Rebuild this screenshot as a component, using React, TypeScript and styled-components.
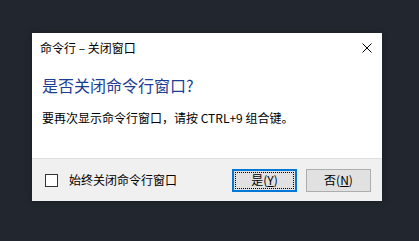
import React, { useState } from 'react';
import styled, { createGlobalStyle } from 'styled-components';

const Global = createGlobalStyle`
  html, body {
    margin: 0;
    padding: 0;
    background: #22272f;
  }
  body {
    font-family: "Noto Sans CJK SC", "Liberation Sans", sans-serif;
    width: 419px;
    height: 241px;
    overflow: hidden;
  }
`;

const Page = styled.div`
  padding: 33px 0 0 32px;
`;

const Dialog = styled.div`
  width: 350px;
  height: 168px;
  background: #ffffff;
  display: flex;
  flex-direction: column;
  box-shadow: 0 0 6px rgba(0, 0, 0, 0.35);
`;

const TitleBar = styled.div`
  height: 30px;
  display: flex;
  align-items: center;
  justify-content: space-between;
  padding: 0 10px 0 8px;
`;

const Title = styled.span`
  font-size: 12px;
  line-height: 16px;
  color: #000;
`;

const CloseIcon = styled.svg`
  width: 10px;
  height: 10px;
  display: block;
`;

const Content = styled.div`
  flex: 1;
  padding: 12px 10px 0 10px;
  display: flex;
  flex-direction: column;
`;

const Heading = styled.div`
  font-size: 16px;
  line-height: 20px;
  color: #1b3d94;
`;

const Message = styled.div`
  margin-top: 15px;
  font-size: 12px;
  line-height: 16px;
  color: #000;
`;

const Footer = styled.div`
  height: 42px;
  border-top: 1px solid #dfdfdf;
  background: #f0f0f0;
  display: flex;
  align-items: center;
  padding: 0 11px 0 13px;
`;

const CheckLabel = styled.label`
  display: flex;
  align-items: center;
  gap: 11px;
  flex: 1;
  font-size: 12px;
  line-height: 16px;
  color: #000;
  cursor: default;
`;

const Box = styled.span<{ checked: boolean }>`
  width: 11px;
  height: 11px;
  border: 1px solid #333333;
  background: #ffffff;
  display: flex;
  align-items: center;
  justify-content: center;
  font-size: 10px;
  line-height: 1;
`;

const Buttons = styled.div`
  display: flex;
  gap: 9px;
`;

const Button = styled.button<{ primary?: boolean }>`
  width: 65px;
  height: 23px;
  box-sizing: border-box;
  background: #e1e1e1;
  border: ${p => (p.primary ? '2px solid #0078d7' : '1px solid #adadad')};
  padding: 0;
  font-family: inherit;
  font-size: 12px;
  line-height: 16px;
  color: #000;
  position: relative;
  display: flex;
  align-items: center;
  justify-content: center;

  &::after {
    content: '';
    display: ${p => (p.primary ? 'block' : 'none')};
    position: absolute;
    inset: 1px;
    border: 1px dotted #000;
  }

  u {
    text-decoration: underline;
    text-underline-offset: 1px;
  }
`;

const App = () => {
  const [always, setAlways] = useState(false);

  return (
    <Page>
      <Global />
      <Dialog>
        <TitleBar>
          <Title>命令行 – 关闭窗口</Title>
          <CloseIcon viewBox="0 0 10 10">
            <path d="M0.5 0.5 L9.5 9.5 M9.5 0.5 L0.5 9.5" stroke="#000" strokeWidth="1" fill="none" />
          </CloseIcon>
        </TitleBar>
        <Content>
          <Heading>是否关闭命令行窗口?</Heading>
          <Message>要再次显示命令行窗口，请按 CTRL+9 组合键。</Message>
        </Content>
        <Footer>
          <CheckLabel onClick={() => setAlways(!always)}>
            <Box checked={always}>{always ? '✓' : ''}</Box>
            始终关闭命令行窗口
          </CheckLabel>
          <Buttons>
            <Button primary>
              是(<u>Y</u>)
            </Button>
            <Button>
              否(<u>N</u>)
            </Button>
          </Buttons>
        </Footer>
      </Dialog>
    </Page>
  );
};

export default App;
